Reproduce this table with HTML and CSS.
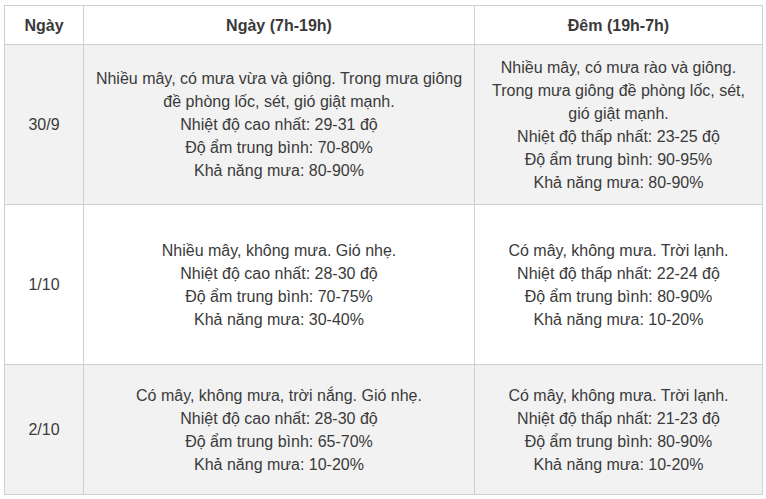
FILE: index.html
```html
<!DOCTYPE html>
<html lang="vi">
<head>
<meta charset="utf-8">
<title>Dự báo thời tiết</title>
<link rel="stylesheet" href="styles.css">
</head>
<body>
<table class="forecast">
  <colgroup>
    <col class="c-day">
    <col class="c-daytime">
    <col class="c-night">
  </colgroup>
  <thead>
    <tr class="row-head">
      <th>Ngày</th>
      <th>Ngày (7h-19h)</th>
      <th>Đêm (19h-7h)</th>
    </tr>
  </thead>
  <tbody>
    <tr class="row-a shaded">
      <td>30/9</td>
      <td>Nhiều mây, có mưa vừa và giông. Trong mưa giông<br>đề phòng lốc, sét, gió giật mạnh.<br>Nhiệt độ cao nhất: 29-31 độ<br>Độ ẩm trung bình: 70-80%<br>Khả năng mưa: 80-90%</td>
      <td>Nhiều mây, có mưa rào và giông.<br>Trong mưa giông đề phòng lốc, sét,<br>gió giật mạnh.<br>Nhiệt độ thấp nhất: 23-25 độ<br>Độ ẩm trung bình: 90-95%<br>Khả năng mưa: 80-90%</td>
    </tr>
    <tr class="row-a">
      <td>1/10</td>
      <td>Nhiều mây, không mưa. Gió nhẹ.<br>Nhiệt độ cao nhất: 28-30 độ<br>Độ ẩm trung bình: 70-75%<br>Khả năng mưa: 30-40%</td>
      <td>Có mây, không mưa. Trời lạnh.<br>Nhiệt độ thấp nhất: 22-24 độ<br>Độ ẩm trung bình: 80-90%<br>Khả năng mưa: 10-20%</td>
    </tr>
    <tr class="row-b shaded">
      <td>2/10</td>
      <td>Có mây, không mưa, trời nắng. Gió nhẹ.<br>Nhiệt độ cao nhất: 28-30 độ<br>Độ ẩm trung bình: 65-70%<br>Khả năng mưa: 10-20%</td>
      <td>Có mây, không mưa. Trời lạnh.<br>Nhiệt độ thấp nhất: 21-23 độ<br>Độ ẩm trung bình: 80-90%<br>Khả năng mưa: 10-20%</td>
    </tr>
  </tbody>
</table>
</body>
</html>
```
FILE: styles.css
```css
html, body {
  margin: 0;
  padding: 0;
  background: #ffffff;
}
body {
  padding: 5px 0 0 4px;
  font-family: "Liberation Sans", Arial, sans-serif;
  color: #3a3a3a;
}
.forecast {
  border-collapse: collapse;
  table-layout: fixed;
  width: 758px;
  font-size: 16px;
  line-height: 23px;
}
.c-day { width: 79px; }
.c-daytime { width: 391px; }
.c-night { width: 288px; }
.forecast th,
.forecast td {
  border: 1px solid #cfcfcf;
  text-align: center;
  vertical-align: middle;
  padding: 0 4px;
}
.forecast th {
  font-weight: bold;
}
.row-head { height: 39px; }
.row-a { height: 160px; }
.row-b { height: 130px; }
.shaded { background: #f2f2f2; }
```
